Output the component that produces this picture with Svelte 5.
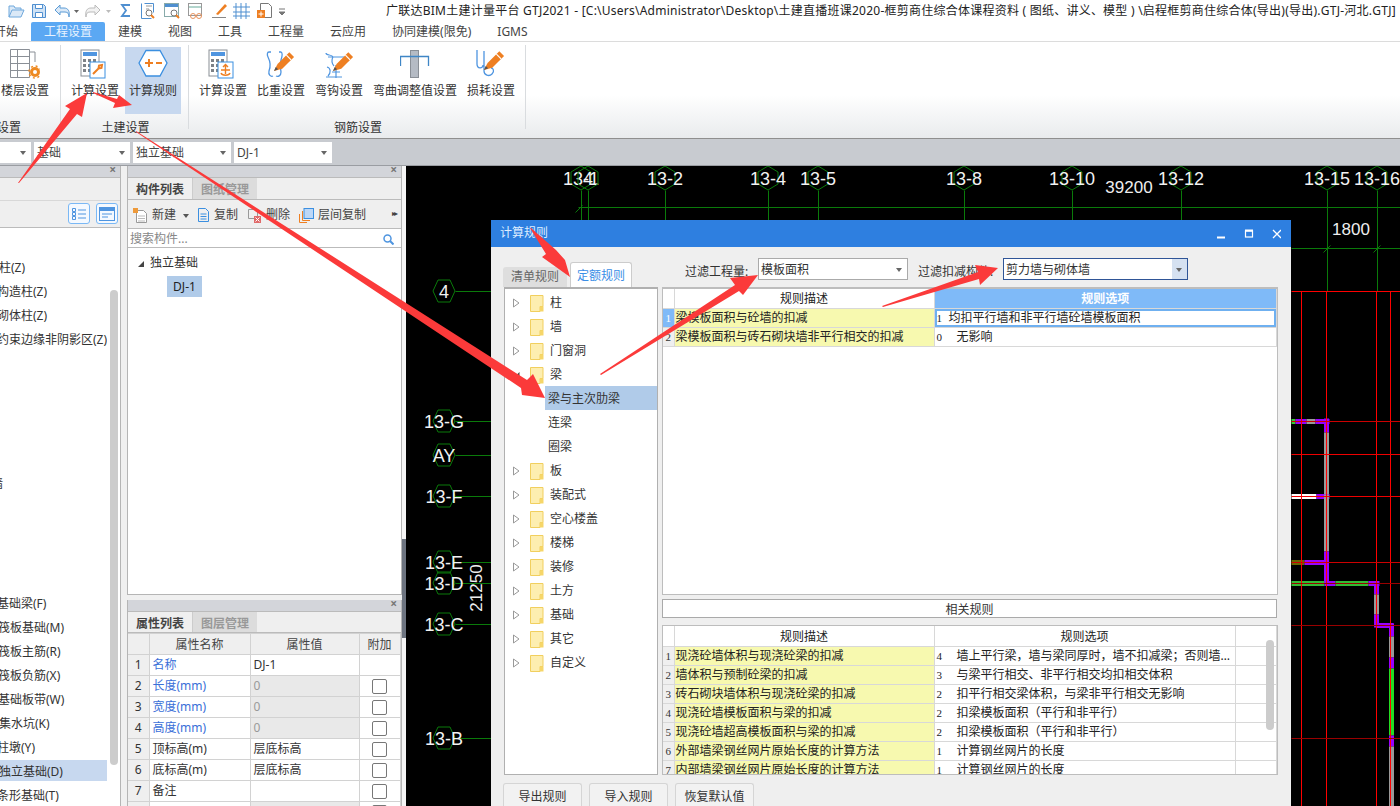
<script>
  const tabs = ['开始','工程设置','建模','视图','工具','工程量','云应用','协同建模(限免)','IGMS'];
  const leftRows = [
    ['暗柱(Z)',-13],['构造柱(Z)',-3],['砌体柱(Z)',-3],['约束边缘非阴影区(Z)',-3],
    ['',0],['',0],['',0],['',0],['',0],['墙',-9],['',0],['',0],['',0],['',0],
    ['基础梁(F)',-3],['筏板基础(M)',-2],['筏板主筋(R)',-2],['筏板负筋(X)',-2],['基础板带(W)',-2],
    ['集水坑(K)',-1],['柱墩(Y)',-3],['独立基础(D)',-1],['条形基础(T)',-3]
  ];
  const props = [
    ['名称','DJ-1',true,false,false],['长度(mm)','0',true,true,true],['宽度(mm)','0',true,true,true],
    ['高度(mm)','0',true,true,true],['顶标高(m)','层底标高',false,false,true],['底标高(m)','层底标高',false,false,true],
    ['备注','',false,false,true],['','',false,true,true]
  ];
  const tree = [
    ['柱',1],['墙',1],['门窗洞',1],['梁',2],['梁与主次肋梁',3],['连梁',0],['圈梁',0],['板',1],['装配式',1],
    ['空心楼盖',1],['楼梯',1],['装修',1],['土方',1],['基础',1],['其它',1],['自定义',1]
  ];
  const rules = [
    ['现浇砼墙体积与现浇砼梁的扣减','4','墙上平行梁，墙与梁同厚时，墙不扣减梁；否则墙扣减梁体积，与梁非平行相交'],
    ['墙体积与预制砼梁的扣减','3','与梁平行相交、非平行相交均扣相交体积'],
    ['砖石砌块墙体积与现浇砼梁的扣减','2','扣平行相交梁体积，与梁非平行相交无影响'],
    ['现浇砼墙模板面积与梁的扣减','2','扣梁模板面积（平行和非平行）'],
    ['现浇砼墙超高模板面积与梁的扣减','2','扣梁模板面积（平行和非平行）'],
    ['外部墙梁钢丝网片原始长度的计算方法','1','计算钢丝网片的长度'],
    ['内部墙梁钢丝网片原始长度的计算方法','1','计算钢丝网片的长度']
  ];
  const topAxes = [['13-1',581],['4',588],['13-2',665],['13-4',768],['13-5',818],['13-8',964],['13-10',1072],['13-12',1181],['13-15',1327],['13-16',1377]];
  const sideAxes = [['4',291],['13-G',421],['AY',455],['13-F',496],['13-E',562],['13-D',583],['13-C',624],['13-B',738]];
  const redV = [1301,1326,1376,1390];
  const redH = [[291,'#f00'],[421,'#c00'],[454,'#e00'],[496,'#e00'],[562,'#c00'],[583,'#900'],[625,'#900'],[738,'#900']];
  const walls = [
    ['M1291 421H1295','#3c3'],['M1295 421H1306','#90f'],['M1306 421H1315','#999'],['M1315 421H1329','#90f'],['M1326 418V432','#90f'],['M1326 432V494','#999'],
    ['M1291 496H1316','#fff'],['M1316 496H1329','#90f'],['M1326 494V551','#999'],['M1291 562H1304','#660'],['M1304 562H1326','#90f'],['M1326 551V583','#90f'],
    ['M1291 583H1324','#3b3'],['M1324 583H1335','#90f'],['M1335 583H1368','#3b3'],['M1368 583H1379','#90f'],['M1376 581V594','#90f'],['M1376 594V614','#999'],['M1376 614V627','#90f'],
    ['M1376 625H1393','#90f'],['M1391 623V636','#90f'],['M1391 636V657','#999'],['M1391 657V668','#90f'],['M1391 668V735','#2d2'],['M1391 735V746','#90f'],['M1391 746V806','#999']
  ];
  const hex = (x, y) => `${x},${y-12} ${x+10},${y-6} ${x+10},${y+6} ${x},${y+12} ${x-10},${y+6} ${x-10},${y-6}`;
  const hexS = (x, y) => `${x-11},${y} ${x-6},${y-11} ${x+6},${y-11} ${x+11},${y} ${x+6},${y+11} ${x-6},${y+11}`;
</script>

{#snippet calc()}
  <rect x="1" y="1" width="18" height="26" fill="#fff" stroke="#8a8f96"/>
  <rect x="3" y="3" width="14" height="4" fill="#4f95e0"/>
  <path d="M3 10h3v3H3zM8 10h3v3H8zM13 10h3v3h-3zM3 15h3v3H3zM8 15h3v3H8zM3 20h3v3H3zM8 20h3v3H8z" fill="#7d8288"/>
  <rect x="10" y="13" width="15" height="16" fill="#fff" stroke="#3b8fe0"/>
{/snippet}
{#snippet pencil(dx, dy)}
  <g transform="translate({dx} {dy}) scale(1.18)"><path d="M0 17 3 11 13 1 17 5 7 15Z" fill="#ee7f22"/><path d="M10.500 3.500 14.500 7.500" stroke="#fff" stroke-width="1"/><path d="M0 17 1.500 13.500 3.500 15.500Z" fill="#555"/></g>
{/snippet}

<div class="app">
  <div class="titlebar">
    <svg class="qa" width="386" height="22" viewBox="0 0 386 22" fill="none">
      <path d="M9 17V6h5l1 2h6v2M9 17l3-7h12l-3 7Z" stroke="#6fa8dc" fill="#dbe9f7"/>
      <path d="M32.500 4.500h11l2 2v11h-13Z" stroke="#4f8fd0" fill="#cfe2f5"/><path d="M35.500 4.500h7v4h-7ZM35.500 12.500h7v5h-7Z" stroke="#4f8fd0" fill="#fff"/>
      <path d="M60 5 55 10l5 5v-3h5c3 0 4 2 4 5 1-6-1-9-5-9h-4Z" stroke="#5b9bd5" fill="#dbe9f7"/>
      <path d="M74 10h5l-2.500 3Z" fill="#666"/>
      <path d="M95 5l5 5-5 5v-3h-5c-3 0-4 2-4 5-1-6 1-9 5-9h4Z" stroke="#bbb" fill="#f2f2f2"/>
      <path d="M106 10h5l-2.500 3Z" fill="#bbb"/>
      <path d="M130 5h-8l4 5.500-4 5.500h8" stroke="#4f8fd0" stroke-width="1.800"/>
      <path d="M141.500 3.500v15h10M144.500 3.500h9v9" stroke="#4f8fd0"/><path d="M146 6h6M146 9h3" stroke="#999"/><circle cx="149" cy="13" r="3" stroke="#777"/><path d="m151 15 3 3" stroke="#ee7f22" stroke-width="2"/>
      <rect x="164.500" y="3.500" width="14" height="13" stroke="#8aa" fill="#fff"/><rect x="165" y="4" width="13" height="3" fill="#4f8fd0"/><circle cx="174" cy="13" r="3" stroke="#777"/><path d="m176 15 3 3" stroke="#ee7f22" stroke-width="2"/>
      <rect x="188.500" y="3.500" width="13" height="12" stroke="#999" fill="#fff"/><path d="M189 7h12" stroke="#6a9"/><circle cx="193" cy="16" r="2.500" stroke="#e8915a"/><circle cx="199" cy="16" r="2.500" stroke="#e8915a"/>
      <path d="M212 17.500h14" stroke="#888"/><path d="M216 14 225 4l2 2-9 9Z" fill="#ee7f22"/>
      <path d="M236 3v16M241 3v16M246 3v16M233 7h17M233 12h17M233 16h17" stroke="#4f8fd0"/>
      <path d="M260.500 3.500h8l3 3v11h-11Z" stroke="#777" fill="#fff"/><rect x="257" y="10" width="8" height="8" fill="#ee7f22"/><path d="M261 11.500v5M258.500 14h5" stroke="#fff"/>
      <path d="M279 9h6M279 12h6l-3 3Z" stroke="#777" fill="#777"/>
    </svg>
    <span class="apptitle">广联达BIM土建计量平台 GTJ2021 - [C:\Users\Administrator\Desktop\土建直播班课2020-框剪商住综合体课程资料 ( 图纸、讲义、模型 ) \启程框剪商住综合体(导出)(导出).GTJ-河北.GTJ]</span>
  </div>

  <div class="tabs">
    {#each tabs as t, i}<span class="tab" class:on={i === 1}>{t}</span>{/each}
  </div>

  <div class="ribbon">
    <div class="group g1">
      <div class="items">
        <div class="item">
          <svg class="ic" viewBox="0 0 30 30" fill="none"><path d="M.5.500h19v28H.5ZM.5 7.500h19M.5 14.500h19M.5 21.500h19M7.500 1v28" stroke="#8a8f96"/><path d="M20 3h5v10" stroke="#8a8f96"/><circle cx="25" cy="23" r="3.500" stroke="#ee8a22" stroke-width="3"/><circle cx="25" cy="23" r="6" stroke="#ee8a22" stroke-width="1.500" stroke-dasharray="2 2.700"/></svg>
          <span>楼层设置</span>
        </div>
      </div>
      <div class="glabel" style="margin-left:-27px;width:48px">楼层设置</div>
    </div>
    <div class="sep"></div>
    <div class="group g2">
      <div class="items">
        <div class="item">
          <svg class="ic" viewBox="0 0 30 30" fill="none">{@render calc()}<path d="m13 25 6-6M22 16l-3 .500-.5 3 3-.500Z" stroke="#ee7f22" stroke-width="2"/></svg>
          <span>计算设置</span>
        </div>
        <div class="item sel">
          <svg class="ic" viewBox="0 0 30 30" fill="none"><path d="M1 14 8 1.500h14L29 14l-7 13H8Z" fill="#fff" stroke="#3b8fe0" stroke-width="1.300"/><path d="M7 14h8M11 10v8" stroke="#ee7f22" stroke-width="2"/><path d="M18 14h6" stroke="#ee7f22" stroke-width="2"/></svg>
          <span>计算规则</span>
        </div>
      </div>
      <div class="glabel">土建设置</div>
    </div>
    <div class="sep"></div>
    <div class="group g3">
      <div class="items">
        <div class="item">
          <svg class="ic" viewBox="0 0 30 30" fill="none">{@render calc()}<path d="M17.500 16v9M13 21h9M15 18l2.500-2.500L20 18M13 24c1 3 8 3 9 0" stroke="#ee7f22" stroke-width="1.400"/></svg>
          <span>计算设置</span>
        </div>
        <div class="item">
          <svg class="ic" viewBox="0 0 30 30" fill="none"><path d="M5 3H3c-2 0-2 3-1 5 2 4 3 9 1 14-1 4 2 6 4 5M13 3h2c2 1 1 5 0 8-1 4-1 8 0 12 0 4-3 5-5 4" stroke="#4f95e0" stroke-width="1.300"/>{@render pencil(8, 2)}</svg>
          <span>比重设置</span>
        </div>
        <div class="item">
          <svg class="ic" viewBox="0 0 30 30" fill="none"><path d="M2 4c0 3 6 1 7 4M4 8h16M2 28h16M9 8c-2 3-1 7 1 9M12 16v13M8 23h8M3 18c4 1 4 6 1 9" stroke="#4f95e0" stroke-width="1.200"/>{@render pencil(9, 2)}</svg>
          <span>弯钩设置</span>
        </div>
        <div class="item">
          <svg class="ic" viewBox="0 0 30 30" fill="none"><rect x="10.500" y="1.500" width="8" height="27" fill="#b5bbc4" stroke="#8a8f96"/><path d="M.5 17V7.500h28V17" stroke="#3f86c6" stroke-width="1.300"/></svg>
          <span>弯曲调整值设置</span>
        </div>
        <div class="item">
          <svg class="ic" viewBox="0 0 30 30" fill="none"><path d="M1 1v14c0 5 6 5 6 1M8 2v20c0 4 5 6 8 3 3-3 1-6-1-6" stroke="#4f95e0" stroke-width="1.300"/>{@render pencil(8, 1)}</svg>
          <span>损耗设置</span>
        </div>
      </div>
      <div class="glabel">钢筋设置</div>
    </div>
    <div class="sep"></div>
  </div>

  <div class="combos">
    <div class="combo c0"><i></i></div>
    <div class="combo c1">基础<i></i></div>
    <div class="combo c2">独立基础<i></i></div>
    <div class="combo c3">DJ-1<i></i></div>
  </div>

  <div class="main">
    <aside class="pane left">
      <div class="phead"><b>×</b></div>
      <div class="lsub"></div>
      <div class="ltools">
        <span class="lbtn"><svg width="14" height="14" viewBox="0 0 14 14" fill="none" stroke="#4f95e0"><path d="M.5 1.500h3v3h-3ZM.5 5.500h3v3h-3ZM.5 9.500h3v3h-3ZM6 3h8M6 7h8M6 11h8"/></svg></span>
        <span class="lbtn"><svg width="16" height="14" viewBox="0 0 16 14" fill="none"><rect x=".5" y=".5" width="15" height="13" stroke="#4f95e0"/><rect x="1" y="1" width="14" height="3" fill="#4f95e0"/><path d="M3 7h10M3 10h6" stroke="#4f95e0"/></svg></span>
      </div>
      <div class="llist">
        {#each leftRows as r, i}
          <div class="lrow" class:sel={i === 21}><span style="margin-left:{r[1]}px">{r[0]}</span></div>
        {/each}
        <div class="lscroll"></div>
      </div>
    </aside>

    <div class="midcol">
      <section class="pane comp">
        <div class="phead"><b>×</b></div>
        <div class="ptabs"><span class="ptab on">构件列表</span><span class="ptab">图纸管理</span></div>
        <div class="ptools">
          <svg width="15" height="15" viewBox="0 0 15 15" fill="none"><path d="M3.500 2.500h7l3 3v9h-10Z" stroke="#999" fill="#fff"/><path d="M5 8h7M5 10.500h7M5 13h7" stroke="#bbb"/><path d="M0 0h5v5H0Z" fill="#ee9a3a"/></svg>
          <span class="pt">新建</span><i class="caret"></i>
          <svg class="t2" width="13" height="14" viewBox="0 0 13 14" fill="none"><path d="M1.500.5h7l3 3v10h-10Z" stroke="#3b8fe0"/><path d="M3.500 6h6M3.500 8.500h6M3.500 11h6" stroke="#3b8fe0"/></svg>
          <span class="pt">复制</span>
          <svg class="t3" width="14" height="15" viewBox="0 0 14 15" fill="none"><path d="M.5 1.500h9v9h-9Z" stroke="#999"/><rect x="6" y="8" width="7" height="7" fill="#e06a6a"/><path d="m7.500 9.500 4 4M11.500 9.500l-4 4" stroke="#fff"/></svg>
          <span class="pt">删除</span>
          <svg class="t4" width="15" height="15" viewBox="0 0 15 15" fill="none"><rect x="5" y=".5" width="9.500" height="10" fill="#bcd7f7" stroke="#3b8fe0"/><path d="M3.500 3v9.500H11M.5 6v8.500H8" stroke="#ee7f22"/></svg>
          <span class="pt">层间复制</span>
          <span class="more">▸▸</span>
        </div>
        <div class="search"><span>搜索构件...</span>
          <svg width="11" height="11" viewBox="0 0 11 11" fill="none"><circle cx="4.500" cy="4.500" r="3.500" stroke="#4f95e0" stroke-width="1.500"/><path d="m7 7 3.500 3.500" stroke="#4f95e0" stroke-width="2"/></svg>
        </div>
        <div class="ctree">
          <div class="croot"><i></i>独立基础</div>
          <div class="cleaf">DJ-1</div>
        </div>
      </section>
      <section class="pane prop">
        <div class="phead"><b>×</b></div>
        <div class="ptabs"><span class="ptab on">属性列表</span><span class="ptab">图层管理</span></div>
        <table class="ptable">
          <colgroup><col style="width:21px"/><col style="width:101px"/><col style="width:109px"/><col style="width:41px"/></colgroup>
          <thead><tr><th></th><th>属性名称</th><th>属性值</th><th>附加</th></tr></thead>
          <tbody>
            {#each props as p, i}
              <tr>
                <td class="n">{i + 1}</td>
                <td class:blue={p[2]}>{p[0]}</td>
                <td class:gray={p[3]}>{p[1]}</td>
                <td class="ck">{#if p[4]}<span class="box"></span>{/if}</td>
              </tr>
            {/each}
          </tbody>
        </table>
      </section>
    </div>

    <div class="split"><i></i></div>

    <div class="stage">
      <svg class="cad" width="994" height="640" viewBox="406 166 994 640" fill="none">
        {#each topAxes as a}
          <path d="M{a[1]} 190V291" stroke="#0a7a0a"/>
          <polygon points={hex(a[1], 178)} stroke="#0a7a0a"/>
          <text x={a[1]} y="184.500" text-anchor="middle" class="cadt">{a[0]}</text>
        {/each}
        <path d="M578 207H1400M1291 248H1400" stroke="#0a7a0a"/>
        <path d="M575 212l7-7M1323 252l7-7M1373 252l7-7" stroke="#0a7a0a"/>
        <text x="1129" y="193" text-anchor="middle" class="cadd">39200</text>
        <text x="1351" y="235" text-anchor="middle" class="cadd">1800</text>
        {#each sideAxes as a}
          <path d="M455 {a[1]}H491" stroke="#0a7a0a"/>
          <polygon points={hexS(444, a[1])} stroke="#0a7a0a"/>
          <text x="444" y={a[1] + 6.500} text-anchor="middle" class="cadt">{a[0]}</text>
        {/each}
        <text transform="translate(482 588) rotate(-90)" text-anchor="middle" class="cadd">21250</text>
        {#each walls as w}<path d={w[0]} stroke={w[1]} stroke-width="5"/>{/each}
        {#each redV as x}<path d="M{x} 291V806" stroke="#f00"/>{/each}
        {#each redH as h}<path d="M1291 {h[0]}H1400" stroke={h[1]}/>{/each}
      </svg>
    </div>
  </div>

  <div class="dialog">
    <div class="dtitle">
      <span>计算规则</span>
      <svg width="64" height="10" viewBox="0 0 64 10" fill="none" stroke="#fff"><path d="M0 8.500h8" stroke-width="2"/><rect x="28.500" y="2" width="7" height="6" stroke-width="1.200"/><path d="M28 1.500h8" stroke-width="2"/><path d="m56 1 8 8M64 1l-8 8" stroke-width="1.300"/></svg>
    </div>
    <div class="dfilter">
      <div class="dtabs"><span class="dtab">清单规则</span><span class="dtab on">定额规则</span></div>
      <span class="flabel fl1">过滤工程量:</span>
      <div class="fcombo f1">模板面积<i></i></div>
      <span class="flabel fl2">过滤扣减构件:</span>
      <div class="fcombo f2">剪力墙与砌体墙<em><i></i></em></div>
    </div>
    <div class="dbody">
      <div class="rtree">
        {#each tree as t}
          {#if t[1] === 3}
            <div class="trow child sel">{t[0]}</div>
          {:else if t[1] === 0}
            <div class="trow child">{t[0]}</div>
          {:else}
            <div class="trow">
              <svg class="exp" width="7" height="10" viewBox="0 0 7 10">
                {#if t[1] === 2}<path d="M6.500 2v6h-6Z" fill="#444"/>{:else}<path d="M.5 1v8L6 5Z" fill="#fff" stroke="#999"/>{/if}
              </svg>
              <svg class="folder" width="14" height="17" viewBox="0 0 14 17"><path d="M.5.5h12.500v11h-3v5H.5Z" fill="#fdeeb0" stroke="#f1cf5e"/><path d="M10 11.500h3.500v5H10Z" fill="#f6d669" /></svg>
              <span>{t[0]}</span>
            </div>
          {/if}
        {/each}
      </div>
      <div class="rright">
        <div class="upper">
          <table class="rt">
            <colgroup><col style="width:11px"/><col style="width:260px"/><col/></colgroup>
            <thead><tr><th></th><th>规则描述</th><th class="hl">规则选项</th></tr></thead>
            <tbody>
              <tr><td class="num on">1</td><td class="desc">梁模板面积与砼墙的扣减</td><td class="opt cur"><b>1</b>均扣平行墙和非平行墙砼墙模板面积</td></tr>
              <tr><td class="num">2</td><td class="desc">梁模板面积与砖石砌块墙非平行相交的扣减</td><td class="opt"><b class="wide">0</b>无影响</td></tr>
            </tbody>
          </table>
        </div>
        <div class="related">相关规则</div>
        <div class="lower">
          <table class="rt">
            <colgroup><col style="width:11px"/><col style="width:260px"/><col style="width:301px"/><col/></colgroup>
            <thead><tr><th></th><th>规则描述</th><th>规则选项</th><th class="blank"></th></tr></thead>
            <tbody>
              {#each rules as r, i}
                <tr><td class="num">{i + 1}</td><td class="desc">{r[0]}</td><td class="opt"><b class="wide">{r[1]}</b>{r[2]}</td><td class="blank"></td></tr>
              {/each}
            </tbody>
          </table>
          <div class="vbar"></div>
        </div>
      </div>
    </div>
    <div class="dbtns"><span>导出规则</span><span>导入规则</span><span>恢复默认值</span></div>
  </div>

  <svg class="arrows" width="1400" height="806" viewBox="0 0 1400 806">
    <polygon points="18,183 70,109 65,106 87,93 82,117 77,114 19,183"/>
    <polygon points="93,92 117,99 119,95 132,105 113,108 115,103 93,93"/>
    <polygon points="136,131 527,380 533,374 545,398 522,395 521,388 136,132"/>
    <polygon points="600,374 735,285 730,278 758,275 743,295 739,291 601,375"/>
    <polygon points="882,306 978,272 975,265 998,268 980,285 979,279 883,307"/>
    <polygon points="530,228 546,254 542,257 570,277 565,260 556,250 531,228"/>
  </svg>
</div>

<style>
  :global(body) { margin: 0; background: #fff; }
  .app {
    position: relative; width: 1400px; height: 806px; overflow: hidden;
    display: flex; flex-direction: column; color: #222;
    font: 12px/1.2 "Noto Sans", "Noto Sans CJK SC", sans-serif;
  }
  .titlebar { height: 22px; flex: none; display: flex; align-items: center; background: #fff; white-space: nowrap; }
  .qa { flex: none; }
  .apptitle { letter-spacing: .24px; }
  .tabs { height: 19px; flex: none; display: flex; background: #fff; border-bottom: 1px solid #dcdcdc; margin-left: -19px; line-height: 19px; color: #444; }
  .tab { padding: 0 13px; }
  .tab.on { background: #5ba8f3; color: #e8f3ff; border-radius: 2px 2px 0 0; }
  .ribbon { height: 96px; flex: none; display: flex; background: linear-gradient(#fff 55%, #e9ebed); border-bottom: 1px solid #8f8f8f; }
  .group { display: flex; flex-direction: column; padding-top: 5px; position: relative; }
  .g1 { width: 60px; }
  .g2 { width: 127px; padding-left: 6px; box-sizing: border-box; }
  .g3 { width: 336px; padding-left: 6px; box-sizing: border-box; }
  .g1 .items { margin-left: -3px; }
  .sep { width: 1px; margin: 3px 0 9px; background: #d9dcdf; }
  .items { display: flex; gap: 2px; height: 67px; }
  .item { padding: 2px 4px 0; display: flex; flex-direction: column; align-items: center; min-width: 48px; color: #333; white-space: nowrap; }
  .item.sel { background: #c7d8ef; }
  .ic { width: 30px; height: 30px; margin-bottom: 5px; flex: none; }
  .glabel { margin-top: 6px; text-align: center; color: #333; white-space: nowrap; line-height: 16px; }
  .g2 .glabel { margin-left: -4px; }
  .g3 .glabel { margin-left: -4px; }
  .combos { height: 27px; background: #c8cbd0; display: flex; gap: 3px; padding-top: 3px; box-sizing: border-box; border-bottom: 1px solid #9a9da2; flex: none; }
  .combo { height: 21px; background: #fff; line-height: 21px; padding-left: 3px; position: relative; box-sizing: border-box; color: #444; }
  .combo i, .fcombo i { position: absolute; right: 5px; top: 9px; border: 3.500px solid transparent; border-top: 4px solid #666; border-bottom: 0; }
  .c0 { width: 31px; } .c1 { width: 96px; } .c2 { width: 98px; } .c3 { width: 98px; }
  .main { flex: 1; display: flex; min-height: 0; background: #f0f0f0; }
  .pane { background: #fff; box-sizing: border-box; }
  .phead { height: 12px; box-sizing: border-box; background: #d3d5da; position: relative; border-bottom: 1px solid #bbb; flex: none; }
  .phead b { position: absolute; right: 4px; top: -3px; color: #777; font-size: 12px; line-height: 14px; }
  .left { width: 121px; flex: none; display: flex; flex-direction: column; margin-right: 6px; border-right: 1px solid #b5b5b5; }
  .lsub { height: 22px; flex: none; background: #efefef; }
  .ltools { height: 28px; flex: none; background: #efefef; border-top: 1px solid #d8d8d8; border-bottom: 1px solid #bbb; display: flex; justify-content: flex-end; gap: 6px; padding: 2px 2px 0 0; box-sizing: border-box; }
  .lbtn { width: 22px; height: 21px; border: 1px solid #7ab8f5; border-radius: 3px; box-sizing: border-box; display: flex; align-items: center; justify-content: center; background: #f4f9ff; }
  .llist { position: relative; flex: 1; padding-top: 28px; overflow: hidden; }
  .lrow { height: 24px; line-height: 24px; width: 107px; white-space: nowrap; overflow: hidden; color: #333; }
  .lrow.sel { background: #c7d8ef; height: 21px; line-height: 23px; margin-bottom: 3px; }
  .lscroll { position: absolute; left: 110px; top: 62px; width: 8px; height: 475px; background: #ccc; border-radius: 4px; }
  .midcol { width: 275px; flex: none; display: flex; flex-direction: column; gap: 5px; }
  .comp { height: 429px; flex: none; border: 1px solid #b5b5b5; border-top: 0; display: flex; flex-direction: column; }
  .prop { flex: 1; border: 0 solid #b5b5b5; border-left-width: 1px; border-right-width: 1px; overflow: hidden; }
  .ptabs { height: 22px; flex: none; box-sizing: border-box; background: #efefef; display: flex; border-bottom: 1px solid #bbb; }
  .prop .ptabs { height: 21px; }
  .ptab { width: 64px; text-align: center; line-height: 24px; background: #dcdcdc; color: #999; font-weight: 700; border-left: 1px solid #ccc; }
  .prop .ptab { line-height: 23px; }
  .ptab.on { background: #efefef; color: #444; border: 0; }
  .ptools { height: 29px; flex: none; box-sizing: border-box; background: #efefef; display: flex; align-items: center; padding: 2px 0 0 5px; border-bottom: 1px solid #bbb; position: relative; color: #444; }
  .pt { margin-left: 4px; }
  .caret { margin: 2px 0 0 7px; border: 3px solid transparent; border-top: 4px solid #555; border-bottom: 0; }
  .t2 { margin-left: 8px; } .t3 { margin-left: 10px; } .t4 { margin-left: 9px; }
  .more { position: absolute; right: 5px; top: 8px; font-size: 8px; letter-spacing: -2px; color: #444; }
  .search { height: 19px; flex: none; box-sizing: border-box; display: flex; align-items: center; justify-content: space-between; padding: 3px 7px 0 2px; border-bottom: 1px solid #bbb; color: #888; }
  .ctree { padding: 5px 0 0 22px; color: #333; flex: 1; }
  .croot { display: flex; align-items: center; height: 21px; }
  .croot i { width: 0; height: 0; margin: 0 6px 0 -12px; border-bottom: 6px solid #444; border-left: 6px solid transparent; }
  .cleaf { margin: 2px 0 0 17px; width: 35px; height: 21px; line-height: 21px; background: #b0cbe9; text-align: center; color: #222; }
  .ptable { border-collapse: collapse; table-layout: fixed; width: 272px; color: #333; }
  .ptable th, .ptable td { height: 19px; padding: 1px 3px 0; border: 1px solid #d2d2d2; font-weight: 400; }
  .ptable th { background: #efefef; color: #444; text-align: center; height: 18px; padding-top: 2px; }
  .ptable tr > :first-child { border-left: 0; }
  .ptable .n { background: #efefef; text-align: center; padding: 1px 0 0; }
  .blue { color: #3a6fd8; }
  .gray { background: #e9e9e9; color: #999; }
  .ptable .ck { text-align: center; padding: 0; height: 20px; }
  .box { display: block; width: 13px; height: 13px; margin: 0 auto; border: 1px solid #777; border-radius: 2px; }
  .split { width: 4px; flex: none; background: #f5f5f5; position: relative; }
  .split i { position: absolute; right: 0; top: 373px; width: 4px; height: 99px; background: #6d7480; }
  .stage { flex: 1; background: #000; min-width: 0; }
  .cad { display: block; }
  .cad path { transform: translate(.5px, .5px); }
  .cadt { fill: #f2f2f2; font: 18px "Liberation Sans", sans-serif; }
  .cadd { fill: #eee; font: 17px "Liberation Sans", sans-serif; }

  .dialog { position: absolute; left: 491px; top: 220px; width: 800px; height: 586px; background: #efefef; display: flex; flex-direction: column; color: #222; }
  .dtitle { height: 27px; flex: none; background: #2e7fe0; color: #dfeeff; display: flex; align-items: center; justify-content: space-between; padding: 0 10px 0 9px; }
  .dfilter { height: 40px; position: relative; flex: none; display: flex; align-items: flex-start; }
  .dtabs { position: absolute; left: 12px; top: 15px; display: flex; align-items: flex-end; gap: 3px; height: 25px; }
  .dtab { width: 64px; height: 20px; line-height: 20px; text-align: center; background: #dedede; color: #666; border-radius: 3px 3px 0 0; }
  .dtab.on { width: 62px; height: 25px; line-height: 25px; background: #fff; color: #3a8ee6; border: 1px solid #ccc; border-bottom: 0; box-sizing: border-box; }
  .flabel { position: absolute; top: 17px; line-height: 16px; white-space: nowrap; color: #333; }
  .fl1 { left: 194px; } .fl2 { left: 427px; }
  .fcombo { position: absolute; top: 11px; height: 22px; box-sizing: border-box; background: #fff; border: 1px solid #aaa; line-height: 22px; padding-left: 2px; color: #333; }
  .f1 { left: 267px; width: 150px; }
  .f2 { left: 512px; width: 185px; border-color: #2f5597; }
  .f2 em { position: absolute; right: 0; top: 0; bottom: 0; width: 15px; background: #d5e1f1; }
  .dbody { flex: 1; min-height: 0; display: flex; padding-left: 13px; }
  .rtree { width: 154px; height: 488px; box-sizing: border-box; background: #fff; border: 1px solid #b0b0b0; border-top-width: 2px; padding-top: 1px; flex: none; }
  .trow { height: 24px; box-sizing: border-box; padding-top: 2px; display: flex; align-items: center; padding-left: 8px; color: #333; }
  .exp { flex: none; margin-right: 10px; }
  .folder { flex: none; margin-right: 6px; }
  .child { padding-left: 43px; }
  .child.sel { margin-left: 40px; padding-left: 3px; background: #b0cbe9; }
  .rright { width: 616px; margin-left: 4px; flex: none; display: flex; flex-direction: column; }
  .upper { height: 308px; box-sizing: border-box; background: #fff; border: 1px solid #bdbdbd; border-top-width: 2px; }
  .related { margin-top: 4px; height: 19px; box-sizing: border-box; width: 615px; border: 1px solid #aaa; background: #fff; text-align: center; line-height: 19px; color: #333; }
  .lower { position: relative; margin-top: 7px; height: 150px; box-sizing: border-box; background: #fff; border: 1px solid #bdbdbd; overflow: hidden; }
  .rt { border-collapse: collapse; table-layout: fixed; width: 100%; }
  .rt th { height: 18px; padding: 1px 0 0; font-weight: 400; text-align: center; border: 1px solid #d8d8d8; border-top: 0; line-height: 14px; }
  .lower .rt th { height: 19px; }
  .rt td { height: 18px; padding: 0; border: 1px solid #d8d8d8; white-space: nowrap; overflow: hidden; text-overflow: ellipsis; line-height: 14px; }
  .rt tr > :first-child { border-left: 0; }
  .rt .hl { background: #7fbaf8; color: #fff; font-weight: 700; }
  .num { text-align: center; font: 11px "Liberation Serif", serif !important; background: #efefef; color: #333; }
  .num.on { background: #7fbaf8; color: #fff; font-weight: 700; }
  .desc { background: #f7f9af; padding-left: 1px !important; }
  .opt { padding-left: 2px !important; }
  .opt b { font: 11px "Liberation Serif", serif; display: inline-block; width: 12px; }
  .opt b.wide { width: 20px; }
  .cur { box-shadow: inset 0 0 0 2px #6fb0f0; }
  .rt .blank { border-bottom: 0; background: #fff; }
  .vbar { position: absolute; left: 603px; top: 14px; width: 8px; height: 90px; border-radius: 4px; background: #ccc; }
  .dbtns { display: flex; gap: 7px; padding-left: 12px; height: 23px; flex: none; }
  .dbtns span { width: 79px; text-align: center; line-height: 25px; background: #f2f2f2; border: 1px solid #d5d5d5; border-bottom: 0; border-radius: 3px 3px 0 0; box-sizing: border-box; color: #333; }
  .arrows { position: absolute; left: 0; top: 0; pointer-events: none; }
  .arrows polygon { fill: #fb3a3a; }
</style>
